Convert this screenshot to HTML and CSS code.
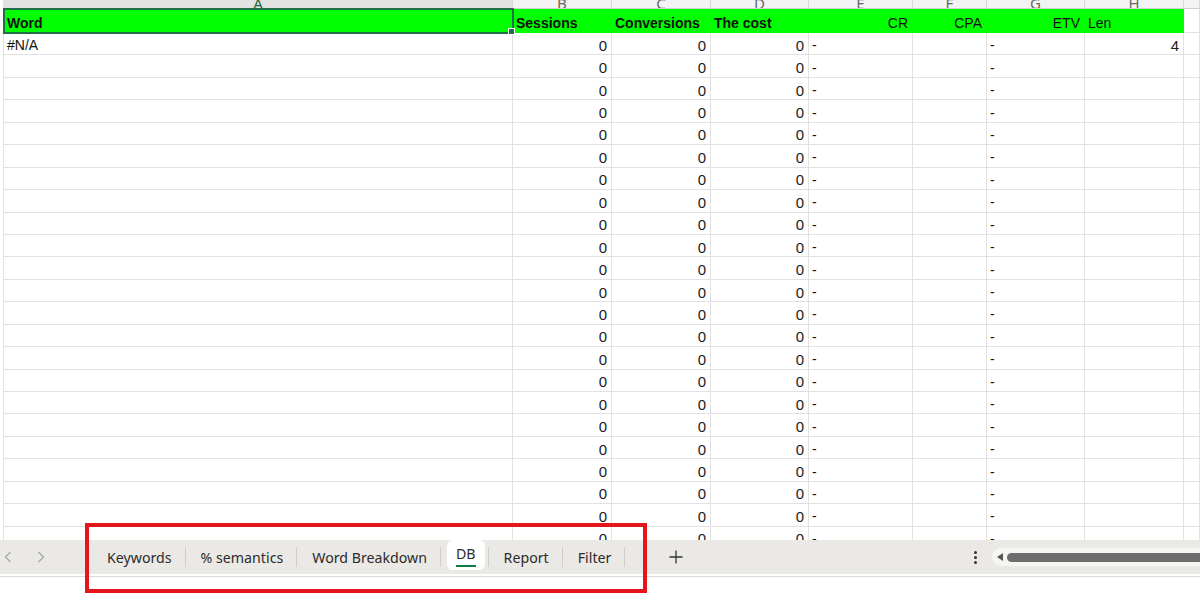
FILE: index.html
```html
<!DOCTYPE html>
<html lang="en">
  <head>
    <meta charset="UTF-8" />
    <meta name="viewport" content="width=device-width, initial-scale=1.0" />
    <title>DB</title>

    <link rel="stylesheet" href="styles.css">
  </head>
  <body>
    <main class="sheet">
      <div class="grid" id="grid">
        <div class="col-head active">A</div>
        <div class="col-head">B</div>
        <div class="col-head">C</div>
        <div class="col-head">D</div>
        <div class="col-head">E</div>
        <div class="col-head">F</div>
        <div class="col-head">G</div>
        <div class="col-head">H</div>
        <div class="col-head"></div>

        <div class="cell fill bold sel">Word</div>
        <div class="cell fill bold">Sessions</div>
        <div class="cell fill bold">Conversions</div>
        <div class="cell fill bold">The cost</div>
        <div class="cell fill num">CR</div>
        <div class="cell fill num">CPA</div>
        <div class="cell fill num">ETV</div>
        <div class="cell fill">Len</div>
        <div class="cell"></div>
      </div>
    </main>

    <footer class="tabbar">
      <div class="nav">
        <svg width="8" height="12" viewBox="0 0 8 12"><path d="M6.5 1 L1.5 6 L6.5 11" /></svg>
        <svg width="8" height="12" viewBox="0 0 8 12"><path d="M1.5 1 L6.5 6 L1.5 11" /></svg>
      </div>

      <nav class="tabs">
        <span class="tab">Keywords</span><i class="sep"></i>
        <span class="tab">% semantics</span><i class="sep"></i>
        <span class="tab">Word Breakdown</span><i class="sep"></i>
        <span class="tab current">DB</span><i class="sep"></i>
        <span class="tab">Report</span><i class="sep"></i>
        <span class="tab">Filter</span><i class="sep"></i>
      </nav>

      <button class="add">
        <svg width="14" height="14" viewBox="0 0 14 14"><path d="M7 0.5 V13.5 M0.5 7 H13.5" /></svg>
      </button>

      <div class="more"><b></b><b></b><b></b></div>

      <div class="hscroll">
        <span class="arrow"></span>
        <span class="thumb"></span>
      </div>
    </footer>

    <div class="status"></div>

    <div class="callout"></div>

    <script>
      const $grid = document.querySelector("#grid");

      // filas de datos debajo del encabezado
      for (let i = 0; i < 23; i++) {
        const values = [
          i === 0 ? "#N/A" : "",
          "0", "0", "0", "-", "", "-",
          i === 0 ? "4" : "",
          ""
        ];

        values.forEach((value, col) => {
          const $cell = document.createElement("div");
          $cell.className = "cell";
          if ((col >= 1 && col <= 3) || col === 7) $cell.classList.add("num", "digit");
          $cell.textContent = value;
          $grid.appendChild($cell);
        });
      }
    </script>
  </body>
</html>
```

FILE: styles.css
```css
* {
  box-sizing: border-box;
}

body {
  margin: 0;
  height: 100vh;
  display: flex;
  flex-direction: column;
  overflow: hidden;
  background: #fff;
  font-family: "Liberation Sans", Arial, sans-serif;
  color: #111;
}

.sheet {
  flex: 1;
  overflow: hidden;
  padding-left: 3px;
}

.grid {
  display: grid;
  grid-template-columns: 509px 99px 99px 98px 104px 74px 98px 99px 1fr;
  grid-template-rows: 9px 24px;
  grid-auto-rows: 22.45px;
  border-left: 1px solid #e1e1e1;
}

/* letras de columna, casi fuera de la vista */
.col-head {
  display: flex;
  justify-content: center;
  align-items: flex-end;
  overflow: hidden;
  background: #f3f3f3;
  border-right: 1px solid #d6d6d6;
  border-bottom: 1px solid #cfcfcf;
  color: #666;
  font-family: "Noto Sans", sans-serif;
  font-size: 15px;
  line-height: 10px;

  &.active {
    background: #e2e2e2;
    color: #1d6b47;
  }
}

.cell {
  display: flex;
  align-items: center;
  padding: 3px 4px 0 3px;
  border-right: 1px solid #e1e1e1;
  border-bottom: 1px solid #e1e1e1;
  font-size: 14px;
  white-space: nowrap;

  &.num {
    justify-content: flex-end;
  }

  &.digit {
    font-size: 15px;
    color: #1c1c1c;
  }

  &.bold {
    font-weight: bold;
  }

  &.fill {
    padding-top: 4px;
    background: #00ff00;
    border-color: #00ff00;
  }

  &.sel {
    position: relative;
    z-index: 1;
    outline: 2px solid #1f7145;
    outline-offset: -1px;

    &::after {
      content: "";
      position: absolute;
      right: -3px;
      bottom: -3px;
      width: 5px;
      height: 5px;
      background: #1f7145;
      border: 1px solid #fff;
    }
  }
}

.tabbar {
  flex: 0 0 34px;
  display: flex;
  align-items: center;
  background: #ebe9e6;
  font-family: "Noto Sans", "Open Sans", sans-serif;
  font-size: 14.2px;
  color: #2b2b2b;
}

.nav {
  width: 92px;
  display: flex;
  gap: 25px;
  padding-left: 4px;

  path {
    fill: none;
    stroke: #a4a4a4;
    stroke-width: 1.2;
  }
}

.tabs {
  display: flex;
  align-items: center;
  height: 100%;
}

.tab {
  padding: 0 13px 0 15px;
  white-space: nowrap;

  &.current {
    position: relative;
    align-self: flex-start;
    height: 30px;
    line-height: 28px;
    margin: 0 3px 0 6px;
    padding: 0 9px;
    background: #fff;
    border-radius: 6px;

    &::after {
      content: "";
      position: absolute;
      left: 9px;
      right: 9px;
      bottom: 3px;
      height: 2px;
      background: #107c41;
    }
  }
}

.sep {
  width: 1px;
  height: 20px;
  background: #d0cecb;
}

.add {
  margin-left: 44px;
  padding: 0;
  border: 0;
  background: none;
  display: flex;

  path {
    stroke: #333;
    stroke-width: 1.3;
  }
}

.more {
  margin-left: auto;
  margin-right: 15px;
  display: flex;
  flex-direction: column;
  gap: 2px;

  b {
    width: 3px;
    height: 3px;
    border-radius: 50%;
    background: #333;
  }
}

.hscroll {
  width: 208px;
  height: 18px;
  display: flex;
  align-items: center;
  gap: 4px;
  padding-left: 5px;
  background: #f6f6f1;
  border-radius: 9px 0 0 9px;

  .arrow {
    width: 0;
    height: 0;
    border-top: 4px solid transparent;
    border-bottom: 4px solid transparent;
    border-right: 6px solid #555;
  }

  .thumb {
    flex: 1;
    height: 9px;
    background: #6e6e6e;
    border-radius: 5px 0 0 5px;
  }
}

.status {
  flex: 0 0 18px;
  margin-top: 2px;
  border-top: 1px solid #dadada;
}

.callout {
  position: absolute;
  left: 85px;
  top: 523px;
  width: 562px;
  height: 70px;
  border: 4px solid #e4161c;
}
```
